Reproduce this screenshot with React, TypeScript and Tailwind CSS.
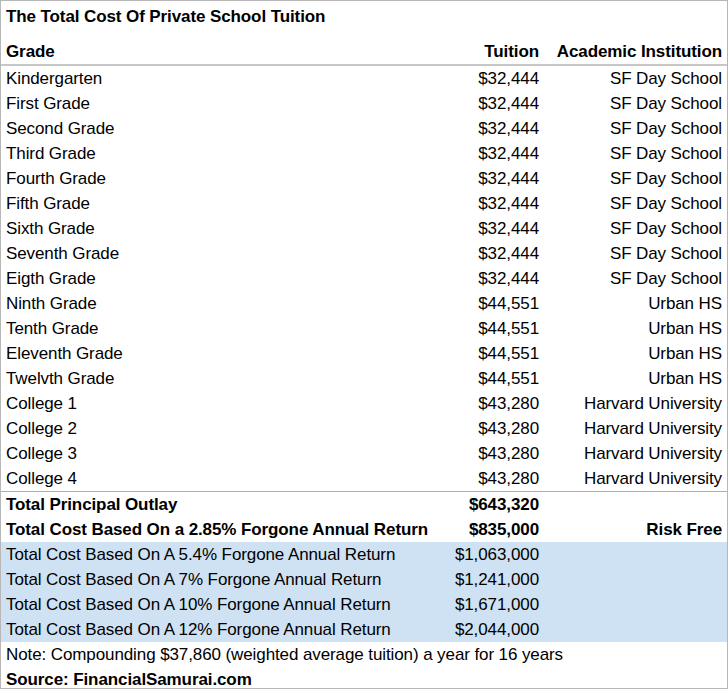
const rows: [string, string, string][] = [
  ["Kindergarten", "$32,444", "SF Day School"],
  ["First Grade", "$32,444", "SF Day School"],
  ["Second Grade", "$32,444", "SF Day School"],
  ["Third Grade", "$32,444", "SF Day School"],
  ["Fourth Grade", "$32,444", "SF Day School"],
  ["Fifth Grade", "$32,444", "SF Day School"],
  ["Sixth Grade", "$32,444", "SF Day School"],
  ["Seventh Grade", "$32,444", "SF Day School"],
  ["Eigth Grade", "$32,444", "SF Day School"],
  ["Ninth Grade", "$44,551", "Urban HS"],
  ["Tenth Grade", "$44,551", "Urban HS"],
  ["Eleventh Grade", "$44,551", "Urban HS"],
  ["Twelvth Grade", "$44,551", "Urban HS"],
  ["College 1", "$43,280", "Harvard University"],
  ["College 2", "$43,280", "Harvard University"],
  ["College 3", "$43,280", "Harvard University"],
  ["College 4", "$43,280", "Harvard University"],
];

const blue: [string, string][] = [
  ["Total Cost Based On A 5.4% Forgone Annual Return", "$1,063,000"],
  ["Total Cost Based On A 7% Forgone Annual Return", "$1,241,000"],
  ["Total Cost Based On A 10% Forgone Annual Return", "$1,671,000"],
  ["Total Cost Based On A 12% Forgone Annual Return", "$2,044,000"],
];

function Row({ a, b, c, className = "" }: { a: string; b: string; c: string; className?: string }) {
  return (
    <div className={`grid h-[25px] grid-cols-[533px_1fr] items-center pl-[5px] pr-[5px] ${className}`}>
      <div className="flex justify-between">
        <span>{a}</span>
        <span>{b}</span>
      </div>
      <span className="text-right">{c}</span>
    </div>
  );
}

export default function App() {
  return (
    <div className="h-[690px] w-[728px] bg-white text-[17px] leading-none tracking-[-0.1px] text-black" style={{ fontFamily: '"Liberation Sans", Arial, sans-serif' }}>
      <div className="h-[689px] border border-[#b7b7b7]">
        <div className="h-[38px] pl-[5px] pt-[7px] font-bold">The Total Cost Of Private School Tuition</div>
        <div className="border-b-2 border-[#c8c8c8]">
          <Row a="Grade" b="Tuition" c="Academic Institution" className="h-[24px] font-bold" />
        </div>
        {rows.map(([a, b, c]) => (
          <Row key={a} a={a} b={b} c={c} />
        ))}
        <div className="border-t border-[#b0b0b0]">
          <Row a="Total Principal Outlay" b="$643,320" c="" className="font-bold" />
          <Row a="Total Cost Based On a 2.85% Forgone Annual Return" b="$835,000" c="Risk Free" className="font-bold" />
        </div>
        <div className="bg-[#cfe2f3]">
          {blue.map(([a, b]) => (
            <Row key={a} a={a} b={b} c="" />
          ))}
        </div>
        <div className="flex h-[25px] items-center pl-[5px]">Note: Compounding $37,860 (weighted average tuition) a year for 16 years</div>
        <div className="flex h-[25px] items-center pl-[5px] font-bold">Source: FinancialSamurai.com</div>
      </div>
    </div>
  );
}
